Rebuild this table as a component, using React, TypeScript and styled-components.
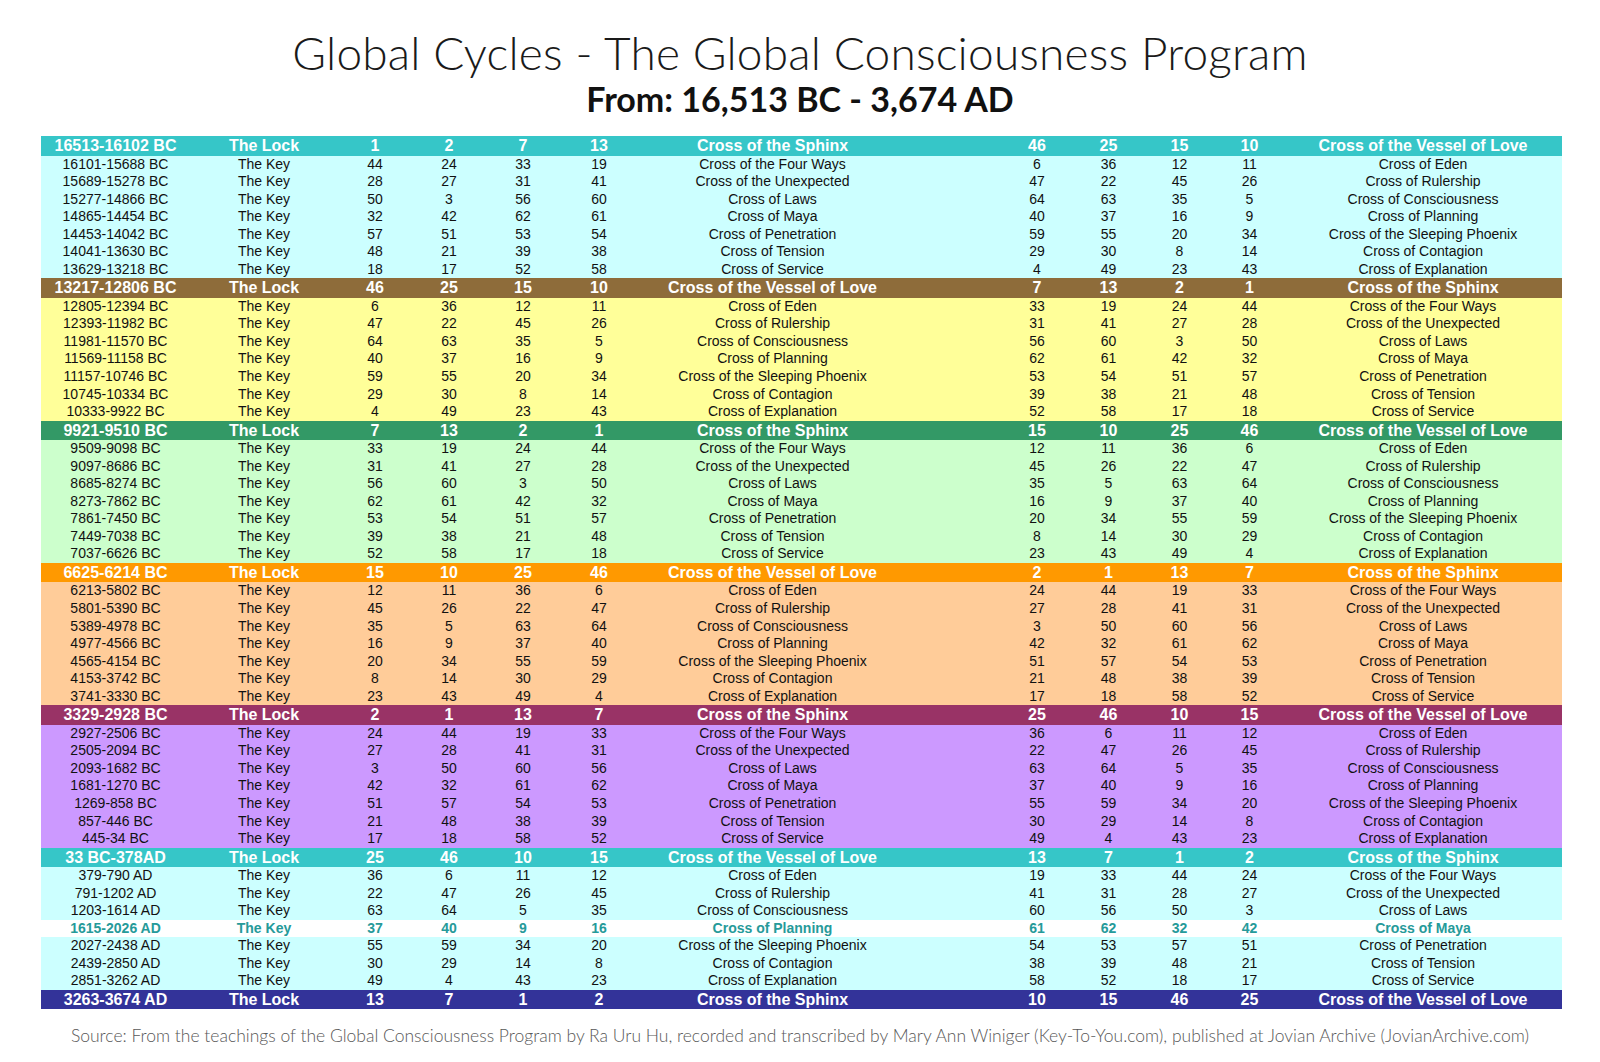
import React from "react";
import styled, { createGlobalStyle } from "styled-components";

type Theme = { lock: string; key: string };

// one row: [period, g1, g2, g3, g4, cross, g5, g6, g7, g8, cross2]
type RowData = [string, string, string, string, string, string, string, string, string, string, string];

type Group = { theme: Theme; lock: RowData; keys: RowData[] };

const r = (s: string): RowData => s.split("|") as RowData;

const GROUPS: Group[] = [
  {
    theme: { lock: "#36c6c8", key: "#ccffff" },
    lock: r("16513-16102 BC|1|2|7|13|Cross of the Sphinx|46|25|15|10|Cross of the Vessel of Love"),
    keys: [
      r("16101-15688 BC|44|24|33|19|Cross of the Four Ways|6|36|12|11|Cross of Eden"),
      r("15689-15278 BC|28|27|31|41|Cross of the Unexpected|47|22|45|26|Cross of Rulership"),
      r("15277-14866 BC|50|3|56|60|Cross of Laws|64|63|35|5|Cross of Consciousness"),
      r("14865-14454 BC|32|42|62|61|Cross of Maya|40|37|16|9|Cross of Planning"),
      r("14453-14042 BC|57|51|53|54|Cross of Penetration|59|55|20|34|Cross of the Sleeping Phoenix"),
      r("14041-13630 BC|48|21|39|38|Cross of Tension|29|30|8|14|Cross of Contagion"),
      r("13629-13218 BC|18|17|52|58|Cross of Service|4|49|23|43|Cross of Explanation"),
    ],
  },
  {
    theme: { lock: "#8e6c3a", key: "#ffff99" },
    lock: r("13217-12806 BC|46|25|15|10|Cross of the Vessel of Love|7|13|2|1|Cross of the Sphinx"),
    keys: [
      r("12805-12394 BC|6|36|12|11|Cross of Eden|33|19|24|44|Cross of the Four Ways"),
      r("12393-11982 BC|47|22|45|26|Cross of Rulership|31|41|27|28|Cross of the Unexpected"),
      r("11981-11570 BC|64|63|35|5|Cross of Consciousness|56|60|3|50|Cross of Laws"),
      r("11569-11158 BC|40|37|16|9|Cross of Planning|62|61|42|32|Cross of Maya"),
      r("11157-10746 BC|59|55|20|34|Cross of the Sleeping Phoenix|53|54|51|57|Cross of Penetration"),
      r("10745-10334 BC|29|30|8|14|Cross of Contagion|39|38|21|48|Cross of Tension"),
      r("10333-9922 BC|4|49|23|43|Cross of Explanation|52|58|17|18|Cross of Service"),
    ],
  },
  {
    theme: { lock: "#339966", key: "#ccffcc" },
    lock: r("9921-9510 BC|7|13|2|1|Cross of the Sphinx|15|10|25|46|Cross of the Vessel of Love"),
    keys: [
      r("9509-9098 BC|33|19|24|44|Cross of the Four Ways|12|11|36|6|Cross of Eden"),
      r("9097-8686 BC|31|41|27|28|Cross of the Unexpected|45|26|22|47|Cross of Rulership"),
      r("8685-8274 BC|56|60|3|50|Cross of Laws|35|5|63|64|Cross of Consciousness"),
      r("8273-7862 BC|62|61|42|32|Cross of Maya|16|9|37|40|Cross of Planning"),
      r("7861-7450 BC|53|54|51|57|Cross of Penetration|20|34|55|59|Cross of the Sleeping Phoenix"),
      r("7449-7038 BC|39|38|21|48|Cross of Tension|8|14|30|29|Cross of Contagion"),
      r("7037-6626 BC|52|58|17|18|Cross of Service|23|43|49|4|Cross of Explanation"),
    ],
  },
  {
    theme: { lock: "#ff9900", key: "#ffcc99" },
    lock: r("6625-6214 BC|15|10|25|46|Cross of the Vessel of Love|2|1|13|7|Cross of the Sphinx"),
    keys: [
      r("6213-5802 BC|12|11|36|6|Cross of Eden|24|44|19|33|Cross of the Four Ways"),
      r("5801-5390 BC|45|26|22|47|Cross of Rulership|27|28|41|31|Cross of the Unexpected"),
      r("5389-4978 BC|35|5|63|64|Cross of Consciousness|3|50|60|56|Cross of Laws"),
      r("4977-4566 BC|16|9|37|40|Cross of Planning|42|32|61|62|Cross of Maya"),
      r("4565-4154 BC|20|34|55|59|Cross of the Sleeping Phoenix|51|57|54|53|Cross of Penetration"),
      r("4153-3742 BC|8|14|30|29|Cross of Contagion|21|48|38|39|Cross of Tension"),
      r("3741-3330 BC|23|43|49|4|Cross of Explanation|17|18|58|52|Cross of Service"),
    ],
  },
  {
    theme: { lock: "#993366", key: "#cc99ff" },
    lock: r("3329-2928 BC|2|1|13|7|Cross of the Sphinx|25|46|10|15|Cross of the Vessel of Love"),
    keys: [
      r("2927-2506 BC|24|44|19|33|Cross of the Four Ways|36|6|11|12|Cross of Eden"),
      r("2505-2094 BC|27|28|41|31|Cross of the Unexpected|22|47|26|45|Cross of Rulership"),
      r("2093-1682 BC|3|50|60|56|Cross of Laws|63|64|5|35|Cross of Consciousness"),
      r("1681-1270 BC|42|32|61|62|Cross of Maya|37|40|9|16|Cross of Planning"),
      r("1269-858 BC|51|57|54|53|Cross of Penetration|55|59|34|20|Cross of the Sleeping Phoenix"),
      r("857-446 BC|21|48|38|39|Cross of Tension|30|29|14|8|Cross of Contagion"),
      r("445-34 BC|17|18|58|52|Cross of Service|49|4|43|23|Cross of Explanation"),
    ],
  },
  {
    theme: { lock: "#36c6c8", key: "#ccffff" },
    lock: r("33 BC-378AD|25|46|10|15|Cross of the Vessel of Love|13|7|1|2|Cross of the Sphinx"),
    keys: [
      r("379-790 AD|36|6|11|12|Cross of Eden|19|33|44|24|Cross of the Four Ways"),
      r("791-1202 AD|22|47|26|45|Cross of Rulership|41|31|28|27|Cross of the Unexpected"),
      r("1203-1614 AD|63|64|5|35|Cross of Consciousness|60|56|50|3|Cross of Laws"),
      r("1615-2026 AD|37|40|9|16|Cross of Planning|61|62|32|42|Cross of Maya"),
      r("2027-2438 AD|55|59|34|20|Cross of the Sleeping Phoenix|54|53|57|51|Cross of Penetration"),
      r("2439-2850 AD|30|29|14|8|Cross of Contagion|38|39|48|21|Cross of Tension"),
      r("2851-3262 AD|49|4|43|23|Cross of Explanation|58|52|18|17|Cross of Service"),
    ],
  },
];

const FINAL: RowData = r("3263-3674 AD|13|7|1|2|Cross of the Sphinx|10|15|46|25|Cross of the Vessel of Love");
const FINAL_COLOR = "#333399";
const CURRENT = "1615-2026 AD";

const GlobalStyle = createGlobalStyle`
  html, body {
    margin: 0;
    padding: 0;
    background: #ffffff;
  }
`;

const Page = styled.div`
  width: 1600px;
  padding-top: 25px;
  display: flex;
  flex-direction: column;
  align-items: center;
`;

const Title = styled.h1`
  margin: 0;
  font-family: Lato, "Open Sans", sans-serif;
  font-weight: 300;
  font-size: 46px;
  line-height: 55px;
  color: #1a1a1a;
  letter-spacing: 0.2px;
`;

const Subtitle = styled.h2`
  margin: -1px 0 0;
  font-family: Lato, "Open Sans", sans-serif;
  font-weight: 700;
  font-size: 34px;
  line-height: 40px;
  color: #111;
`;

const Table = styled.div`
  margin-top: 17px;
  margin-left: 3px;
  width: 1521px;
  display: flex;
  flex-direction: column;
`;

const Row = styled.div<{ $bg: string; $fg: string; $lock?: boolean; $bold?: boolean }>`
  display: grid;
  grid-template-columns: 149px 148px 74px 74px 74px 78px 363px 72px 71px 71px 69px 278px;
  height: ${(p) => (p.$lock ? "19.5px" : "17.55px")};
  line-height: ${(p) => (p.$lock ? "19.5px" : "17.55px")};
  background: ${(p) => p.$bg};
  color: ${(p) => p.$fg};
  font-family: "Liberation Sans", Arial, sans-serif;
  font-size: ${(p) => (p.$lock ? "16px" : "14px")};
  font-weight: ${(p) => (p.$lock || p.$bold ? 700 : 400)};
`;

const Cell = styled.div`
  text-align: center;
  white-space: nowrap;
`;

const CrossCell = styled(Cell)`
  padding-right: 94px;
`;

const Footer = styled.p`
  margin: 16px 0 0;
  font-family: Lato, "Open Sans", sans-serif;
  font-weight: 300;
  font-size: 17.5px;
  line-height: 22px;
  color: #585858;
`;

type RowProps = { data: RowData; bg: string; fg: string; lock?: boolean; bold?: boolean };

function TableRow({ data, bg, fg, lock, bold }: RowProps) {
  const [period, a, b, c, d, cross, e, f, g, h, cross2] = data;
  return (
    <Row $bg={bg} $fg={fg} $lock={lock} $bold={bold}>
      <Cell>{period}</Cell>
      <Cell>{lock ? "The Lock" : "The Key"}</Cell>
      <Cell>{a}</Cell>
      <Cell>{b}</Cell>
      <Cell>{c}</Cell>
      <Cell>{d}</Cell>
      <CrossCell>{cross}</CrossCell>
      <Cell>{e}</Cell>
      <Cell>{f}</Cell>
      <Cell>{g}</Cell>
      <Cell>{h}</Cell>
      <Cell>{cross2}</Cell>
    </Row>
  );
}

export default function App() {
  return (
    <Page>
      <GlobalStyle />
      <Title>Global Cycles - The Global Consciousness Program</Title>
      <Subtitle>From: 16,513 BC - 3,674 AD</Subtitle>

      <Table>
        {GROUPS.map((group) => (
          <React.Fragment key={group.lock[0]}>
            <TableRow data={group.lock} bg={group.theme.lock} fg="#ffffff" lock />
            {group.keys.map((row) =>
              row[0] === CURRENT ? (
                <TableRow key={row[0]} data={row} bg="#ffffff" fg="#269a9a" bold />
              ) : (
                <TableRow key={row[0]} data={row} bg={group.theme.key} fg="#111111" />
              )
            )}
          </React.Fragment>
        ))}
        <TableRow data={FINAL} bg={FINAL_COLOR} fg="#ffffff" lock />
      </Table>

      <Footer>
        Source: From the teachings of the Global Consciousness Program by Ra Uru Hu, recorded and transcribed by Mary
        Ann Winiger (Key-To-You.com), published at Jovian Archive (JovianArchive.com)
      </Footer>
    </Page>
  );
}
